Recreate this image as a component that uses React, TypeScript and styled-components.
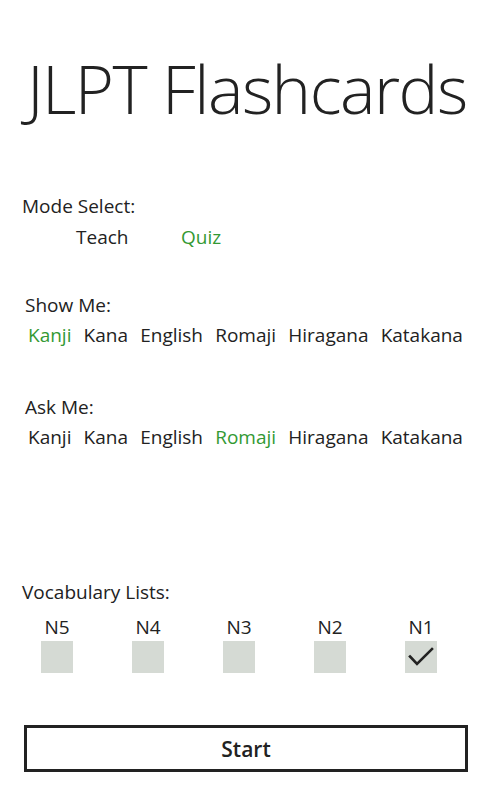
import React, { useState } from "react";
import styled, { createGlobalStyle } from "styled-components";

const Global = createGlobalStyle`
  html, body { margin: 0; padding: 0; background: #ffffff; }
  body { font-family: "Open Sans", "Noto Sans", sans-serif; color: #222222; }
`;

const GREEN = "#339933";

const Page = styled.div`
  width: 480px;
  height: 800px;
  box-sizing: border-box;
  display: flex;
  flex-direction: column;
  overflow: hidden;
`;

const Title = styled.h1`
  margin: 48px 0 0 27px;
  font-size: 67px;
  font-weight: 300;
  line-height: 80px;
  letter-spacing: -1.5px;
  color: #222222;
  white-space: nowrap;
`;

const Label = styled.div<{ $left: number; $top: number }>`
  margin: ${(p) => p.$top}px 0 0 ${(p) => p.$left}px;
  font-size: 19px;
  line-height: 26px;
  color: #222222;
`;

const ModeRow = styled.div`
  display: grid;
  grid-template-columns: 105px 105px;
  margin: 5px 0 0 76px;
`;

const Option = styled.span<{ $active?: boolean }>`
  font-size: 19px;
  line-height: 26px;
  color: ${(p) => (p.$active ? GREEN : "#222222")};
  cursor: pointer;
  white-space: nowrap;
`;

const OptionRow = styled.div<{ $top: number }>`
  display: flex;
  justify-content: space-between;
  margin: ${(p) => p.$top}px 17px 0 28px;
`;

const VocabRow = styled.div`
  display: flex;
  gap: 59px;
  margin: 10px 0 0 41px;
`;

const VocabItem = styled.label`
  display: flex;
  flex-direction: column;
  align-items: center;
  width: 32px;
  cursor: pointer;
`;

const VocabName = styled.span`
  font-size: 19px;
  line-height: 24px;
  color: #222222;
  white-space: nowrap;
`;

const Box = styled.span`
  margin-top: 2px;
  width: 32px;
  height: 32px;
  background: #d5dad4;
  display: flex;
  align-items: center;
  justify-content: center;
`;

const StartButton = styled.button`
  margin: 52px 0 0 24px;
  width: 444px;
  height: 47px;
  box-sizing: border-box;
  border: 3px solid #222222;
  background: #ffffff;
  font-family: "Open Sans", "Noto Sans", sans-serif;
  font-size: 21px;
  font-weight: 600;
  color: #222222;
  padding: 0;
  cursor: pointer;
`;

const Check = () => (
  <svg width="26" height="22" viewBox="0 0 26 22">
    <path d="M2 10.5 L9 18 L24 3" fill="none" stroke="#222222" strokeWidth="2.6" strokeLinecap="square" />
  </svg>
);

const choices = ["Kanji", "Kana", "English", "Romaji", "Hiragana", "Katakana"];
const lists = ["N5", "N4", "N3", "N2", "N1"];

export default function App() {
  const [mode, setMode] = useState("Quiz");
  const [show, setShow] = useState("Kanji");
  const [ask, setAsk] = useState("Romaji");
  const [sel, setSel] = useState<Record<string, boolean>>({ N1: true });

  return (
    <Page>
      <Global />
      <Title>JLPT Flashcards</Title>
      <Label $left={22} $top={65}>Mode Select:</Label>
      <ModeRow>
        {["Teach", "Quiz"].map((m) => (
          <Option key={m} $active={mode === m} onClick={() => setMode(m)}>{m}</Option>
        ))}
      </ModeRow>
      <Label $left={25} $top={42}>Show Me:</Label>
      <OptionRow $top={4}>
        {choices.map((c) => (
          <Option key={c} $active={show === c} onClick={() => setShow(c)}>{c}</Option>
        ))}
      </OptionRow>
      <Label $left={25} $top={46}>Ask Me:</Label>
      <OptionRow $top={4}>
        {choices.map((c) => (
          <Option key={c} $active={ask === c} onClick={() => setAsk(c)}>{c}</Option>
        ))}
      </OptionRow>
      <Label $left={22} $top={129}>Vocabulary Lists:</Label>
      <VocabRow>
        {lists.map((n) => (
          <VocabItem key={n} onClick={() => setSel({ ...sel, [n]: !sel[n] })}>
            <VocabName>{n}</VocabName>
            <Box>{sel[n] && <Check />}</Box>
          </VocabItem>
        ))}
      </VocabRow>
      <StartButton>Start</StartButton>
    </Page>
  );
}
